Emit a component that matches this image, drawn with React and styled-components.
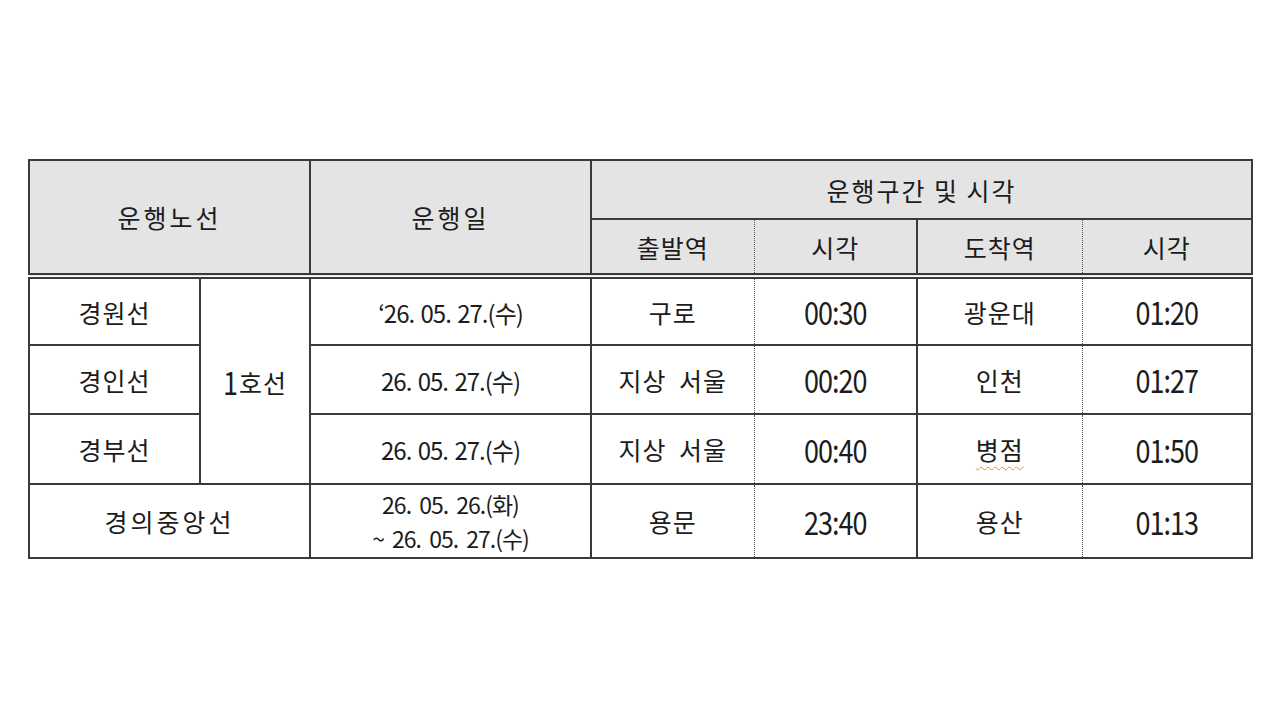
import React from 'react'
import styled, { createGlobalStyle } from 'styled-components'

const GlobalStyle = createGlobalStyle`
    html, body {
        margin: 0;
        padding: 0;
        background: #ffffff;
    }
    body {
        font-family: "Noto Sans CJK KR", "Liberation Sans", sans-serif;
        color: #1c1c1c;
    }
`;

const rows = [
    { line: '경원선', date: '‘26. 05. 27.(수)', from: '구로', dep: '00:30', to: '광운대', arr: '01:20' },
    { line: '경인선', date: '26. 05. 27.(수)', from: '지상 서울', dep: '00:20', to: '인천', arr: '01:27' },
    { line: '경부선', date: '26. 05. 27.(수)', from: '지상 서울', dep: '00:40', to: '병점', arr: '01:50', typo: true },
]

function App() {
    return <Page>
        <GlobalStyle />
        <Schedule>
            <colgroup>
                <col style={{ width: 171 }} />
                <col style={{ width: 110 }} />
                <col style={{ width: 281 }} />
                <col style={{ width: 163 }} />
                <col style={{ width: 163 }} />
                <col style={{ width: 165 }} />
                <col style={{ width: 170 }} />
            </colgroup>
            <thead>
                <tr>
                    <HeadCell colSpan={2} rowSpan={2} $spacing={3} $last>운행노선</HeadCell>
                    <HeadCell rowSpan={2} $spacing={3} $last>운행일</HeadCell>
                    <HeadCell colSpan={4} $spacing={2} $tall>운행구간 및 시각</HeadCell>
                </tr>
                <tr>
                    <HeadCell $last $dotRight>출발역</HeadCell>
                    <HeadCell $last $dotLeft>시각</HeadCell>
                    <HeadCell $last $dotRight>도착역</HeadCell>
                    <HeadCell $last $dotLeft>시각</HeadCell>
                </tr>
            </thead>
            <tbody>
                {rows.map((r, i) => (
                    <Row key={r.line} $h={i === 2 ? 70 : 69}>
                        <Cell>{r.line}</Cell>
                        {i === 0 && <Cell rowSpan={3}><Num $flat>1</Num>호선</Cell>}
                        <Cell><DateText>{r.date}</DateText></Cell>
                        <Cell $dotRight $spaced>{r.from}</Cell>
                        <Cell $dotLeft><Num>{r.dep}</Num></Cell>
                        <Cell $dotRight>{r.typo ? <Typo>{r.to}</Typo> : r.to}</Cell>
                        <Cell $dotLeft><Num>{r.arr}</Num></Cell>
                    </Row>
                ))}
                <Row $h={74}>
                    <Cell colSpan={2} $loose>경의중앙선</Cell>
                    <Cell>
                        <DateStack>
                            <DateText $stacked>26. 05. 26.(화)</DateText>
                            <DateText $stacked>~ 26. 05. 27.(수)</DateText>
                        </DateStack>
                    </Cell>
                    <Cell $dotRight>용문</Cell>
                    <Cell $dotLeft><Num>23:40</Num></Cell>
                    <Cell $dotRight>용산</Cell>
                    <Cell $dotLeft><Num>01:13</Num></Cell>
                </Row>
            </tbody>
        </Schedule>
    </Page>
}

export default App

const LINE = '2px solid #3a3a3a'
const DOTS = '1px dotted #555'

const Page = styled.div`
    width: 1280px;
    height: 720px;
    padding: 159px 0 0 28px;
    box-sizing: border-box;
`;

const Schedule = styled.table`
    border-collapse: collapse;
    table-layout: fixed;
    width: 1223px;
    border: ${LINE};
`;

const HeadCell = styled.th`
    background: #e4e4e4;
    font-weight: 400;
    font-size: 25px;
    letter-spacing: ${p => p.$spacing ?? 1}px;
    text-align: center;
    padding: 0;
    height: ${p => p.$tall ? '57px' : '53px'};
    border: ${LINE};
    border-bottom: ${p => p.$last ? '6px double #3a3a3a' : LINE};
    border-right: ${p => p.$dotRight ? DOTS : LINE};
    border-left: ${p => p.$dotLeft ? DOTS : LINE};
`;

const Row = styled.tr`
    height: ${p => p.$h}px;
`;

const Cell = styled.td`
    font-size: 25px;
    letter-spacing: ${p => p.$loose ? '3px' : '1px'};
    word-spacing: ${p => p.$spaced ? '6px' : '0'};
    text-align: center;
    padding: 0;
    border: ${LINE};
    border-right: ${p => p.$dotRight ? DOTS : LINE};
    border-left: ${p => p.$dotLeft ? DOTS : LINE};
`;

const Num = styled.span`
    display: inline-block;
    font-size: 27px;
    letter-spacing: -1px;
    margin-right: ${p => p.$flat ? '2px' : '0'};
    transform: scaleY(1.18);
`;

const DateText = styled.span`
    display: inline-block;
    font-size: ${p => p.$stacked ? '23px' : '24px'};
    letter-spacing: -1px;
    word-spacing: ${p => p.$stacked ? '4px' : '2px'};
    line-height: ${p => p.$stacked ? '34px' : '31px'};
`;

const DateStack = styled.div`
    display: flex;
    flex-direction: column;
    align-items: center;
`;

const Typo = styled.span`
    text-decoration: underline wavy #e8912a;
    text-decoration-thickness: 1px;
    text-underline-offset: 6px;
`;
